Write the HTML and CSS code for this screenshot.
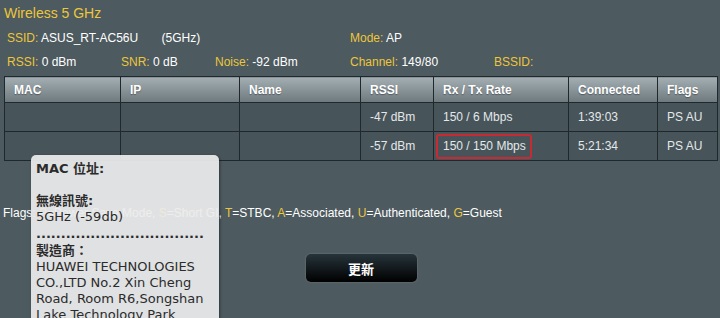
FILE: index.html
```html
<!DOCTYPE html>
<html lang="zh-Hant">
<head>
    <meta charset="UTF-8">
    <meta name="viewport" content="width=device-width, initial-scale=1.0">
    <title>Wireless 5 GHz</title>
    <link rel="stylesheet" href="styles.css">
</head>
<body>
<div id="wrap">
    <h1 class="title">Wireless 5 GHz</h1>
    <div class="info">
        <span class="w-ssid"><em>SSID:</em> ASUS_RT-AC56U&nbsp;&nbsp;&nbsp;&nbsp;&nbsp;&nbsp;&nbsp;(5GHz)</span>
        <span><em>Mode:</em> AP</span>
    </div>
    <div class="info">
        <span class="w-rssi"><em>RSSI:</em> 0 dBm</span>
        <span class="w-snr"><em>SNR:</em> 0 dB</span>
        <span class="w-noise"><em>Noise:</em> -92 dBm</span>
        <span class="w-chan"><em>Channel:</em> 149/80</span>
        <span><em>BSSID:</em></span>
    </div>
    <table class="clients">
        <colgroup>
            <col style="width:116px"><col style="width:119px"><col style="width:121px">
            <col style="width:73px"><col style="width:135px"><col style="width:89px"><col>
        </colgroup>
        <thead>
            <tr><th>MAC</th><th>IP</th><th>Name</th><th>RSSI</th><th>Rx / Tx Rate</th><th>Connected</th><th>Flags</th></tr>
        </thead>
        <tbody>
            <tr><td></td><td></td><td></td><td>-47 dBm</td><td>150 / 6 Mbps</td><td>1:39:03</td><td>PS AU</td></tr>
            <tr><td></td><td></td><td></td><td>-57 dBm</td><td><span class="mark">150 / 150 Mbps</span></td><td>5:21:34</td><td>PS AU</td></tr>
        </tbody>
    </table>
    <p class="legend">Flags: <em>P</em>=Power Save Mode, <em>S</em>=Short GI, <em>T</em>=STBC, <em>A</em>=Associated, <em>U</em>=Authenticated, <em>G</em>=Guest</p>
    <div class="actions">
        <button class="btn">更新</button>
    </div>

    <div class="tip">
        <b>MAC 位址:</b><br>
        <br>
        <b>無線訊號:</b><br>
        5GHz (-59db)
        <b class="dots">..................................</b>
        <b>製造商：</b><br>
        HUAWEI TECHNOLOGIES CO.,LTD No.2 Xin Cheng Road, Room R6,Songshan Lake Technology Park
    </div>
</div>
</body>
</html>
```

FILE: styles.css
```css
html, body {
    margin: 0;
    height: 100%;
}
body {
    background: #4d5a5f;
    color: #fff;
    font-family: "Liberation Sans", Arial, sans-serif;
    font-size: 12px;
    overflow: hidden;
}
#wrap {
    position: relative;
    padding: 4px 2px 0 4px;
}
em {
    font-style: normal;
    color: #ecc63b;
}
.title {
    margin: 0;
    font-size: 14px;
    font-weight: normal;
    line-height: 18px;
    color: #ecc63b;
}
.info {
    display: flex;
    height: 24px;
    line-height: 24px;
    padding-left: 3px;
}
.info:first-of-type {
    margin-top: 4px;
}
.w-ssid { width: 343px; }
.w-rssi { width: 114px; }
.w-snr { width: 94px; }
.w-noise { width: 135px; }
.w-chan { width: 144px; }

.clients {
    margin-top: 2px;
    width: 714px;
    border-collapse: collapse;
    table-layout: fixed;
    border: 1px solid #1f292d;
}
.clients th,
.clients td {
    border: 1px solid #1f292d;
    text-align: left;
    padding: 0 9px;
}
.clients th {
    height: 25px;
    font-weight: bold;
    color: #fff;
    background: linear-gradient(#a4aeb2, #6d797e);
    text-shadow: 0 1px 1px rgba(0, 0, 0, .35);
}
.clients td {
    height: 28px;
    background: #475459;
    color: #e4e8ea;
}
.mark {
    display: inline-block;
    margin-left: -7px;
    padding: 3px 4px 3px 5px;
    line-height: 15px;
    border: 2px solid #c62a33;
    border-radius: 3px;
}

.legend {
    margin: 44px 0 0 -1px;
    line-height: 16px;
}
.actions {
    margin-top: 33px;
    text-align: center;
}
.btn {
    width: 111px;
    height: 28px;
    border: 0;
    border-radius: 5px;
    background: linear-gradient(#26343a, #000);
    box-shadow: 0 0 2px rgba(255, 255, 255, .25);
    color: #fff;
    font-family: "Noto Sans CJK TC", sans-serif;
    font-size: 13px;
    font-weight: bold;
}

.tip {
    position: absolute;
    left: 31px;
    top: 155px;
    width: 178px;
    padding: 6px 5px 10px 5px;
    background: rgba(236, 236, 236, .93);
    border-radius: 5px;
    box-shadow: 1px 1px 3px rgba(0, 0, 0, .4);
    color: #2b2b2b;
    font-family: "DejaVu Sans", Verdana, "Noto Sans CJK TC", sans-serif;
    font-size: 13px;
    line-height: 16px;
}
.tip b {
    font-weight: bold;
}
.dots {
    display: block;
    line-height: 18px;
    white-space: nowrap;
    overflow: hidden;
}
```
